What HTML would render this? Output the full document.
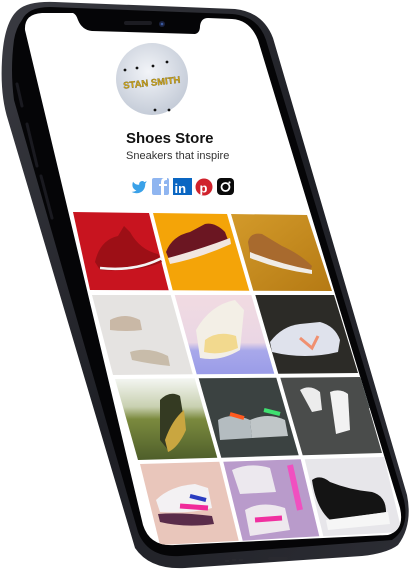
<!DOCTYPE html>
<html><head><meta charset="utf-8"><style>
html,body{margin:0;padding:0;background:#fff;}
body{width:411px;height:571px;overflow:hidden;position:relative;font-family:"Liberation Sans",sans-serif;}
svg{position:absolute;left:0;top:0;}
</style></head><body>
<svg width="411" height="571" viewBox="0 0 411 571">
<defs>
<clipPath id="scr"><path d="M25,30 Q24,14 42,13 L73,13 Q76,14 78,20 Q82,30 92,31 L195,34 Q200,33 200,26 Q201,18 208,18 L232,19 Q250,20 258,40 L400,508 Q405,530 388,535 L175,545 Q150,547 143,525 Z"/></clipPath>
<linearGradient id="frame" x1="0" y1="0" x2="1" y2="1"><stop offset="0" stop-color="#3a3b42"/><stop offset="0.5" stop-color="#1e1f25"/><stop offset="1" stop-color="#2c2d34"/></linearGradient>
<radialGradient id="av" cx="0.45" cy="0.4" r="0.6"><stop offset="0" stop-color="#f2f4f8"/><stop offset="1" stop-color="#c5ccd8"/></radialGradient>
<linearGradient id="field" x1="0" y1="0" x2="0" y2="1"><stop offset="0" stop-color="#f4f6f2"/><stop offset="0.35" stop-color="#c8d0b0"/><stop offset="0.5" stop-color="#7b8a3e"/><stop offset="1" stop-color="#4e5e2a"/></linearGradient>
<linearGradient id="pinkblue" x1="0" y1="0" x2="0" y2="1"><stop offset="0" stop-color="#f1dbe2"/><stop offset="0.6" stop-color="#ead6e4"/><stop offset="0.7" stop-color="#a8a8ea"/><stop offset="1" stop-color="#9a9ce8"/></linearGradient>
<linearGradient id="mustard" x1="0" y1="0" x2="1" y2="1"><stop offset="0" stop-color="#d39a2a"/><stop offset="1" stop-color="#b57a14"/></linearGradient>
</defs>
<path d="M18,10 Q28,1 55,2 L235,9 Q263,12 273,38 L407,495 Q413,525 398,545 Q388,553 362,556 L185,568 Q150,570 135,548 L8,120 Q0,95 2,60 Q4,22 18,10 Z" fill="url(#frame)"/>
<path d="M22,20 Q28,7 50,7 L232,14 Q258,16 266,40 L404,500 Q410,528 392,540 L180,556 Q148,558 138,532 L14,100 Q10,70 14,40 Q16,28 22,20 Z" fill="#050507"/>
<path d="M17,84 L22,106" stroke="#1a1a20" stroke-width="3" stroke-linecap="round"/>
<path d="M27,124 L37,166" stroke="#1a1a20" stroke-width="3" stroke-linecap="round"/>
<path d="M41,176 L52,218" stroke="#1a1a20" stroke-width="3" stroke-linecap="round"/>
<g clip-path="url(#scr)">
<rect x="0" y="0" width="411" height="571" fill="#fff"/>
<polygon points="73,212 149,213 168.7,290.3 90,290" fill="#c8141f"/>
<path d="M95,262 Q100,240 118,236 L124,226 L130,232 Q140,250 158,254 L162,262 Q140,272 100,270 Z" fill="#9d0f16"/>
<path d="M100,268 Q135,272 162,258" stroke="#f4f4f4" stroke-width="2.5" fill="none"/>
<polygon points="153,213 227,214 249.3,290.7 172.7,290.3" fill="#f4a408"/>
<path d="M166,252 Q172,236 190,232 L205,224 Q215,222 225,232 L228,240 Q200,250 170,262 Z" fill="#6b1622"/>
<path d="M168,258 Q198,250 230,238 L231,244 Q200,258 170,264 Z" fill="#f1e6e0"/>
<polygon points="231,214 307,215 332,291 253.3,290.7" fill="url(#mustard)"/>
<path d="M248,242 Q250,232 262,234 L282,246 Q300,254 312,266 L310,272 Q280,266 250,254 Z" fill="#a86a2e"/>
<path d="M250,252 Q280,264 312,270 L312,274 Q280,270 250,258 Z" fill="#f0ece6"/>
<polygon points="92,295 170.7,295 192.7,374.3 113,375" fill="#e5e3e1"/>
<rect x="115" y="330" width="28" height="38" fill="#d8d6d4" transform="skewX(14)" />
<path d="M110,320 Q125,312 140,320 L142,330 Q125,332 110,330 Z" fill="#c9b8a6"/>
<path d="M130,352 Q148,346 168,356 L170,366 Q150,364 132,360 Z" fill="#c8bcaa"/>
<polygon points="174.7,295 251.3,295 274.3,373.7 196.7,374.3" fill="url(#pinkblue)"/>
<path d="M196,330 Q210,305 235,300 L244,310 L240,350 Q220,362 200,358 Z" fill="#f3efe6"/>
<path d="M205,340 Q218,330 236,336 L238,348 Q220,356 204,352 Z" fill="#f2d98e"/>
<polygon points="255.3,295 334,295 358,373 278.3,373.7" fill="#2c2b27"/>
<path d="M270,342 Q282,326 300,324 L320,322 Q335,326 340,340 L338,352 Q305,360 272,352 Z" fill="#dfe2ec"/>
<path d="M300,338 L312,348 L318,336" stroke="#f09070" stroke-width="3" fill="none"/>
<polygon points="115,379 194.7,378.3 217.3,457.7 138,460" fill="url(#field)"/>
<path d="M160,400 Q170,390 180,396 L184,420 Q178,448 168,450 L160,440 Z" fill="#343a22"/>
<path d="M165,440 Q172,420 184,410 L186,430 Q178,448 168,452 Z" fill="#c9a640"/>
<polygon points="198.7,378.3 276.3,377.7 298.7,455.3 221.3,457.7" fill="#3b4241"/>
<rect x="210" y="378" width="70" height="30" fill="#505b5a" transform="skewX(14)"/>
<path d="M218,420 Q232,412 250,420 L252,438 L220,440 Z" fill="#b4bcc0"/>
<path d="M250,420 Q268,412 285,420 L288,436 L252,438 Z" fill="#c0c6c8"/>
<path d="M230,414 L244,418" stroke="#ff5a1f" stroke-width="4"/>
<path d="M264,410 L280,414" stroke="#3fe070" stroke-width="4"/>
<polygon points="280.3,377.7 360,377 382,453 302.7,455.3" fill="#4a4c4b"/>
<path d="M300,390 Q310,384 320,392 L322,410 L312,412 Z" fill="#ececec"/>
<path d="M330,392 Q340,388 348,394 L350,430 L336,434 Z" fill="#f2f2f2"/>
<polygon points="140,464 219.3,461.7 238.7,540.7 160,545" fill="#e9c6bb"/>
<path d="M156,500 Q170,486 195,484 L208,488 L212,508 Q190,514 160,512 Z" fill="#f3f1f3"/>
<path d="M180,506 L208,508" stroke="#f02a9a" stroke-width="5"/>
<path d="M190,496 L206,500" stroke="#2a3cc0" stroke-width="4"/>
<path d="M158,514 Q180,512 212,516 L214,524 Q185,528 160,522 Z" fill="#5a2c4a"/>
<polygon points="223.3,461.7 300.7,459.3 319.3,536.3 242.7,540.7" fill="#b99bcb"/>
<path d="M232,470 Q250,462 270,468 L276,492 L240,494 Z" fill="#ece8ee"/>
<path d="M245,510 Q262,500 285,508 L290,530 L250,536 Z" fill="#eee8ee"/>
<path d="M255,520 L282,518" stroke="#f030a0" stroke-width="5"/>
<path d="M290,465 L300,510" stroke="#f050c0" stroke-width="6"/>
<polygon points="304.7,459.3 384,457 402,532 323.3,536.3" fill="#e7e6ea"/>
<path d="M312,480 Q320,474 330,482 Q350,490 372,492 Q386,496 386,512 L330,520 Q316,508 312,480 Z" fill="#141414"/>
<path d="M326,520 L388,512 L390,524 L328,530 Z" fill="#f6f6f6"/>
</g>
<rect x="124" y="21" width="28" height="4" rx="2" fill="#1c1c22"/>
<circle cx="162" cy="24" r="3" fill="#1a2240"/>
<circle cx="162" cy="24" r="1.3" fill="#3a5aa0"/>
<ellipse cx="152" cy="79" rx="36" ry="36" fill="url(#av)"/>
<g fill="#111"><circle cx="125" cy="70" r="1.4"/><circle cx="137" cy="68" r="1.4"/><circle cx="153" cy="66" r="1.4"/><circle cx="167" cy="62" r="1.4"/><circle cx="155" cy="110" r="1.4"/><circle cx="169" cy="110" r="1.4"/></g>
<text x="123" y="86" font-size="9.5" font-weight="bold" fill="#d4a818" stroke="#6a5a10" stroke-width="0.3" transform="rotate(-6 150 82)">STAN SMITH</text>
<text x="126" y="143" font-size="15" font-weight="bold" fill="#111">Shoes Store</text>
<text x="126" y="159" font-size="11" fill="#333">Sneakers that inspire</text>
<g transform="translate(131,179) scale(0.68)"><path d="M23 3a10.9 10.9 0 0 1-3.14 1.53 4.48 4.48 0 0 0-7.86 3v1A10.66 10.66 0 0 1 3 4s-4 9 5 13a11.64 11.64 0 0 1-7 2c9 5 20 0 20-11.5a4.5 4.5 0 0 0-.08-.83A7.72 7.72 0 0 0 23 3z" fill="#3aa1e8"/></g>
<rect x="152" y="178" width="17" height="17" rx="2" fill="#8fb5f0"/>
<path d="M164,195 L164,186 L167,186 L167,184 L164,184 L164,182 Q164,180 167,180 L167,178 Q161,177 161,182 L161,184 L159,184 L159,186 L161,186 L161,195 Z" fill="#fff"/>
<rect x="173" y="178" width="19" height="17" fill="#0a66c2"/>
<text x="174.5" y="193" font-size="13" font-weight="bold" fill="#fff">in</text>
<circle cx="204" cy="187" r="8.5" fill="#d0222c"/>
<text x="199.5" y="192.5" font-size="13" font-weight="bold" fill="#fff">p</text>
<rect x="217" y="178" width="17" height="17" rx="4" fill="#0a0a0a"/>
<circle cx="225.5" cy="187" r="4" fill="none" stroke="#fff" stroke-width="1.8"/>
<circle cx="229.5" cy="182.5" r="1.1" fill="#fff"/>
<g fill="#2a2a30"><rect x="225" y="560" width="4" height="2"/><rect x="232" y="559" width="4" height="2"/><rect x="239" y="559" width="4" height="2"/><rect x="268" y="557" width="20" height="3" rx="1.5"/><rect x="322" y="555" width="4" height="2"/><rect x="329" y="555" width="4" height="2"/><rect x="336" y="554" width="4" height="2"/><rect x="343" y="554" width="4" height="2"/></g>
</svg>
</body></html>
